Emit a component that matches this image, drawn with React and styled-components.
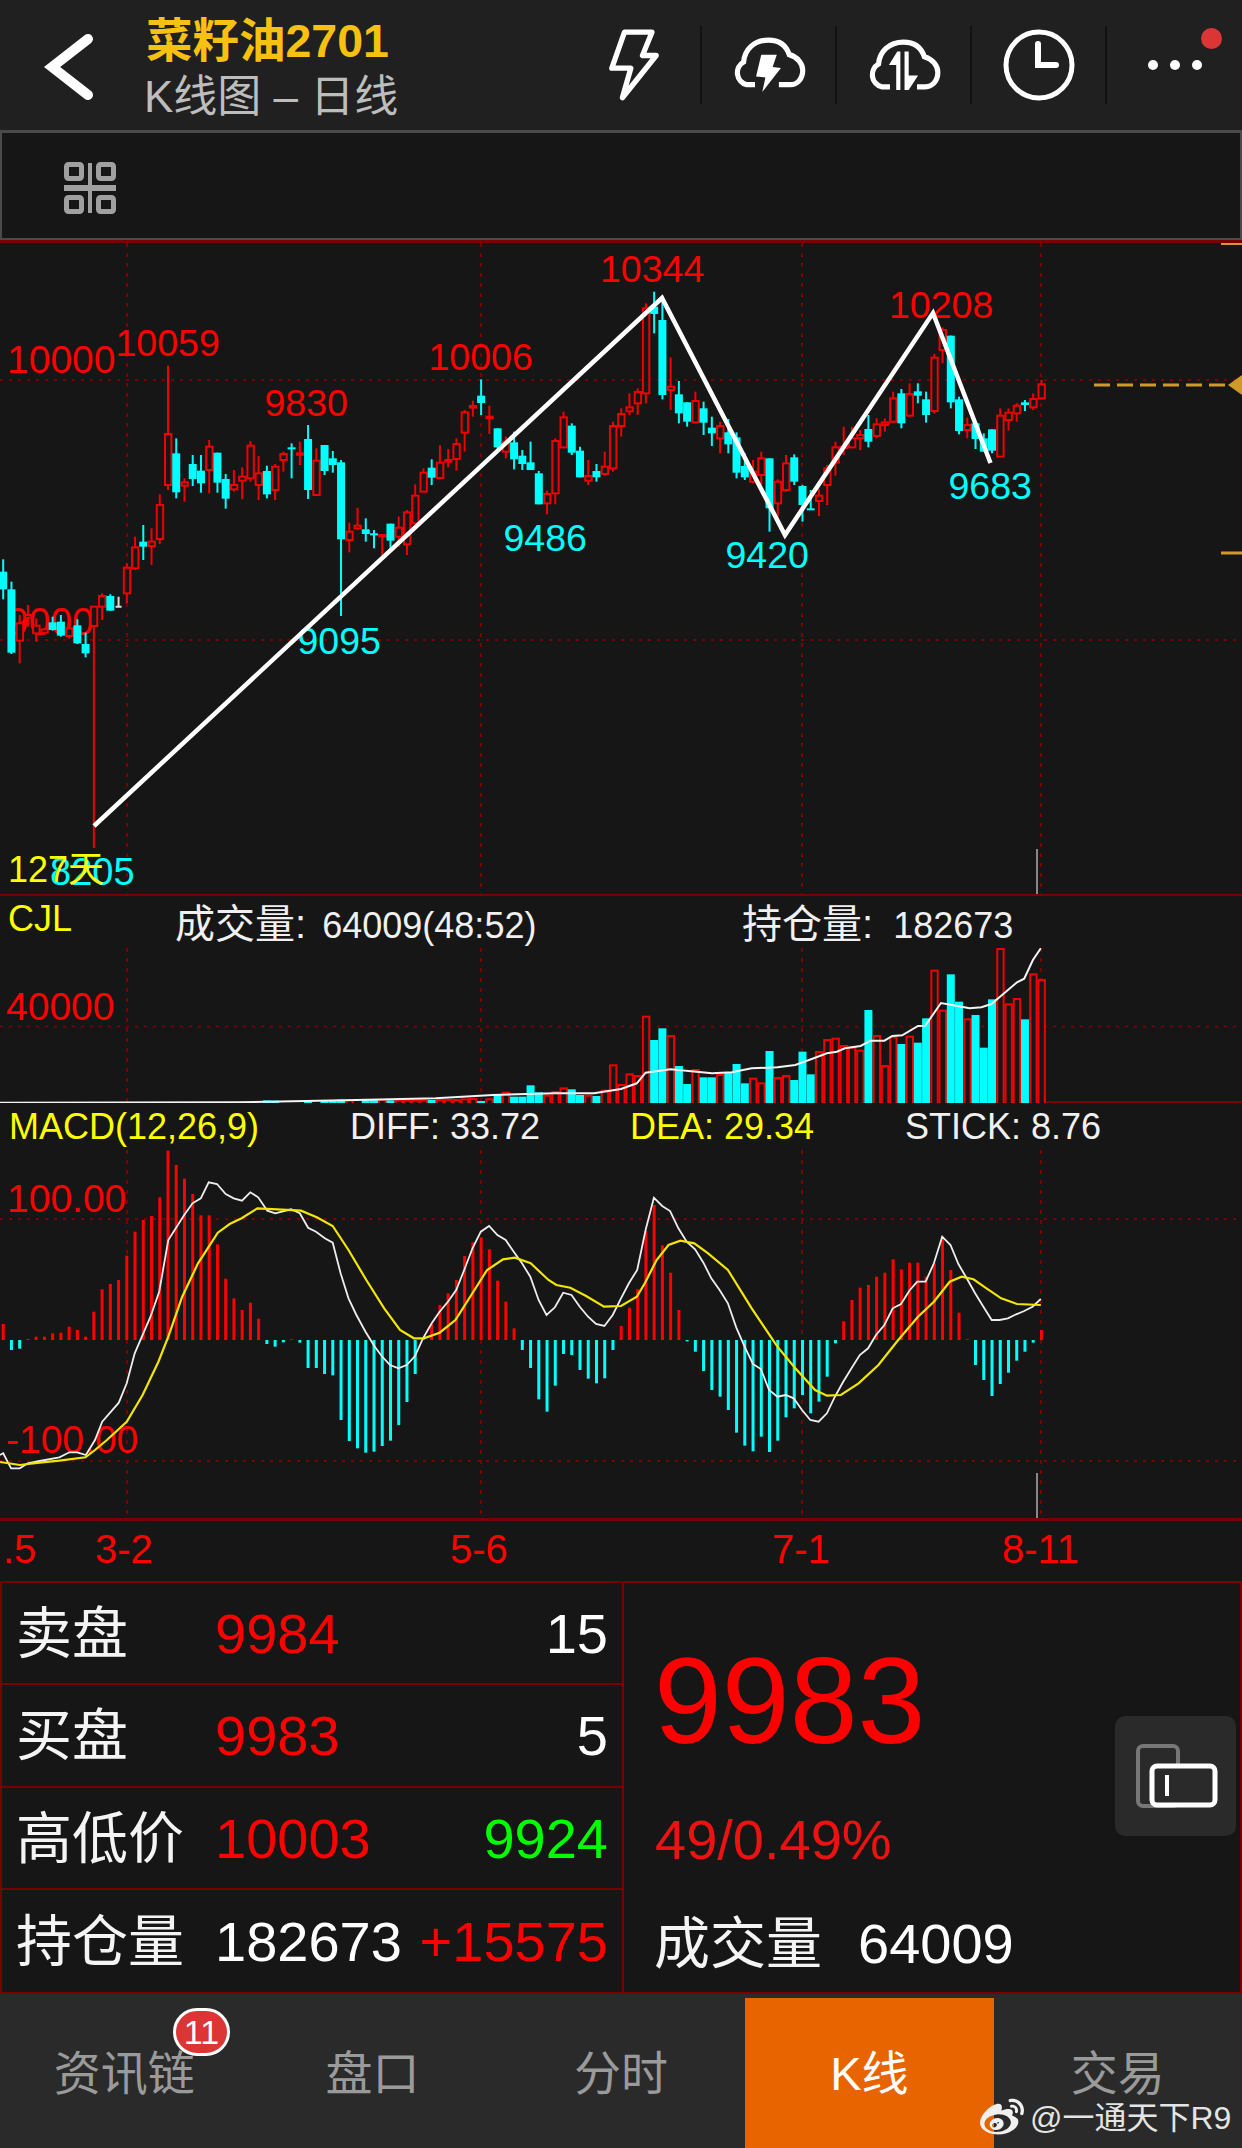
import React from 'react';
import styled, { createGlobalStyle } from 'styled-components';
import { FaWeibo } from 'react-icons/fa';

const FONT = `"Liberation Sans", "Noto Sans CJK SC", sans-serif`;
const RED = '#ff0000';
const CYAN = '#00ffff';
const GRID = '#780000';
const BG = '#161616';

const X0 = 3.2;
const STEP = 8.24;
const cx = (i) => X0 + STEP * i;
const ky = (z) => 240 + z / 3;
const vy = (z) => 880 + z / 3;
const my = (z) => 1120 + z / 3;

const CANDLES = [
  ['c',958,995,1048,1078],['c',1025,1048,1238,1242],['r',1125,1150,1202,1270],['r',1095,1125,1133,1160],['r',1135,1157,1180,1205],
  ['r',1165,1168,1178,1185],['c',1130,1147,1170,1172],['c',1125,1145,1187,1190],['r',1160,1165,1188,1196],['c',1138,1156,1210,1212],
  ['c',1178,1212,1240,1252],['r',1098,1100,1158,1824],['r',1060,1068,1100,1140],['c',1063,1068,1112,1112],['w',1070,1098,1100,1100],
  ['r',970,983,1060,1090],['r',890,922,985,990],['c',855,905,920,960],['r',865,905,918,975],['r',763,795,897,912],
  ['r',377,582,735,750],['c',595,640,757,775],['r',715,727,737,785],['c',645,672,717,738],['c',645,692,730,758],
  ['r',600,620,690,760],['c',638,638,728,758],['c',702,717,776,806],['r',690,735,748,755],['r',682,710,722,778],
  ['r',603,617,715,725],['r',648,700,735,780],['c',677,693,763,775],['r',672,680,750,780],['r',635,642,660,695],
  ['c',610,622,627,715],['r',605,640,644,675],['c',555,597,750,777],['r',625,662,765,765],['c',615,615,693,705],
  ['c',633,655,675,698],['c',660,667,898,1128],['r',848,875,900,937],['r',803,857,865,870],['c',835,868,882,905],
  ['c',870,880,885,925],['r',885,885,888,948],['c',851,851,902,925],['r',830,863,890,920],['r',810,817,913,945],
  ['r',733,767,850,860],['r',685,698,755,757],['c',658,683,713,735],['r',616,668,714,716],['r',627,660,665,682],
  ['r',595,612,657,692],['r',510,517,578,635],['r',482,498,503,530],['c',418,467,489,525],['r',497,530,533,582],
  ['c',565,565,622,625],['r',590,605,635,655],['c',575,607,658,688],['c',630,647,672,690],['c',605,667,690,690],
  ['c',693,700,793,793],['r',752,762,790,823],['r',595,603,760,793],['r',515,532,622,625],['c',550,557,638,645],
  ['c',620,632,712,712],['r',660,708,722,735],['c',672,693,712,725],['r',635,680,702,707],['r',545,558,685,695],
  ['r',505,522,558,590],['r',460,502,514,525],['r',445,456,490,525],['r',190,205,460,490],['c',155,200,222,280],
  ['c',180,240,465,478],['r',352,440,450,510],['c',423,463,520,550],['c',487,487,545,560],['r',455,483,547,550],
  ['c',485,505,548,585],['c',530,563,580,618],['r',545,558,595,640],['c',537,577,613,640],['c',577,592,698,715],
  ['c',640,678,712,720],['r',660,695,725,730],['r',635,655,705,735],['c',655,655,805,875],['r',718,725,790,830],
  ['r',645,670,750,755],['c',643,652,725,735],['c',735,738,795,845],['c',750,805,808,808],['r',748,767,783,828],
  ['r',675,685,735,795],['r',605,622,668,707],['r',560,620,623,645],['r',560,595,622,625],['r',570,585,595,630],
  ['c',525,567,605,622],['r',535,553,588,595],['r',535,547,555,575],['r',455,475,545,548],['c',447,460,550,565],
  ['r',430,462,527,530],['c',430,454,467,490],['c',455,478,525,548],['r',342,353,513,520],['r',262,270,330,370],
  ['c',287,287,487,505],['c',470,478,573,583],['r',533,555,570,595],['c',550,550,597,627],['c',580,595,635,635],
  ['c',568,568,632,640],['r',505,527,650,650],['r',505,518,540,572],['r',490,497,520,545],['c',480,487,495,513],
  ['r',460,477,502,510],['r',420,433,475,478],
];

const VOLUME = [
  [32,'c',661],[33,'c',662],[37,'c',664],[39,'c',661],[40,'c',660],[41,'c',659],[42,'r',661],[44,'c',658],[45,'c',658],[46,'r',660],
  [47,'c',661],[48,'r',662],[49,'r',662],[50,'r',662],[51,'r',662],[52,'c',660],[53,'r',660],[54,'r',660],[55,'r',660],[56,'r',658],
  [57,'r',657],[58,'c',663],[59,'r',658],[60,'c',645],[61,'r',638],[62,'c',650],[63,'c',650],[64,'c',616],[65,'c',637],[66,'r',647],
  [67,'r',636],[68,'r',625],[69,'c',628],[70,'c',645],[71,'r',647],[72,'c',648],[73,'r',632],[74,'r',556],[75,'r',615],[76,'r',583],
  [77,'r',588],[78,'r',410],[79,'c',480],[80,'c',445],[81,'r',468],[82,'c',558],[83,'c',612],[84,'r',570],[85,'c',592],[86,'c',592],
  [87,'r',585],[88,'c',578],[89,'c',552],[90,'c',610],[91,'r',596],[92,'r',610],[93,'c',513],[94,'r',594],[95,'r',588],[96,'c',600],
  [97,'c',515],[98,'c',583],[99,'r',516],[100,'r',480],[101,'r',476],[102,'r',498],[103,'r',503],[104,'r',512],[105,'c',390],[106,'r',468],
  [107,'r',558],[108,'r',472],[109,'c',492],[110,'r',470],[111,'c',488],[112,'c',415],[113,'r',272],[114,'r',392],[115,'c',283],[116,'c',365],
  [117,'r',418],[118,'c',405],[119,'c',503],[120,'c',358],[121,'r',207],[122,'r',373],[123,'r',357],[124,'c',418],[125,'r',283],[126,'r',300],
];

const MACD_BARS = [
  612,690,686,657,650,650,640,638,620,630,650,575,508,492,480,407,335,300,288,232,92,135,176,222,286,286,373,476,535,570,548,596,
  672,680,667,658,668,744,744,762,766,900,963,985,998,995,978,962,915,846,762,655,612,555,520,480,408,367,352,388,482,545,625,
  690,744,838,875,797,702,705,750,776,790,775,690,618,563,508,333,255,376,458,570,664,695,753,810,830,870,938,977,994,950,996,962,
  892,865,825,880,845,770,670,604,540,503,495,470,458,418,448,428,428,470,430,350,450,578,658,735,780,828,792,758,722,695,668,630,
];

const left = (x) => x / 2.525;
const right = (x) => 621 + x / 2.525;
const toPath = (segments, yFn) =>
  segments
    .flatMap(([fx, pts]) => pts.map(([x, y]) => `${fx(x).toFixed(1)},${yFn(y).toFixed(1)}`))
    .join(' ');

const VOL_LINE = toPath([
  [left, [[0,668],[600,667],[900,660],[1100,655],[1245,645],[1400,640],[1500,640],[1568,627]]],
  [right, [[40,610],[62,578],[125,568],[230,580],[280,577],[330,565],[395,562],[440,555],[490,533],[520,520],[545,515],[565,505],[605,498],[630,482],[665,482],[685,468],[710,466],[750,438],[768,437],[808,369],[860,380],[880,385],[910,382],[935,372],[960,347],[1000,307],[1018,296],[1040,240],[1060,205]]],
], vy);

const DIFF_LINE = toPath([
  [left, [[0,1005],[8,1000],[28,1045],[50,1045],[70,1030],[100,1023],[150,1012],[175,997],[195,997],[217,1005],[240,960],[258,905],[300,848],[320,790],[340,700],[380,590],[402,515],[425,360],[465,285],[486,250],[507,235],[527,187],[548,192],[570,222],[590,235],[611,242],[632,217],[652,232],[675,272],[695,280],[735,268],[757,280],[778,323],[798,335],[820,355],[840,368],[860,460],[880,535],[900,585],[923,635],[945,678],[965,710],[985,735],[1006,745],[1027,735],[1048,708],[1068,655],[1090,610],[1110,575],[1131,545],[1152,510],[1172,450],[1193,385],[1214,335],[1235,318],[1256,345],[1277,360],[1297,395],[1318,430],[1339,470],[1360,540],[1380,585],[1401,562],[1422,518],[1443,525],[1464,560],[1485,590],[1505,612],[1526,618],[1547,585]]],
  [right, [[0,535],[20,490],[41,450],[62,330],[83,233],[104,258],[124,273],[145,325],[166,365],[187,388],[208,428],[228,475],[249,510],[270,550],[291,622],[312,680],[333,732],[353,747],[374,810],[395,830],[416,825],[436,835],[457,870],[478,900],[499,905],[520,880],[540,830],[561,785],[582,745],[603,705],[624,685],[644,645],[665,615],[686,565],[707,552],[728,512],[748,485],[769,485],[790,430],[811,350],[832,375],[852,432],[873,475],[894,520],[915,560],[936,600],[956,600],[977,595],[998,583],[1018,573],[1039,560],[1060,537]]],
], my);

const DEA_LINE = toPath([
  [left, [[0,1026],[50,1035],[100,1028],[150,1022],[216,1012],[240,990],[270,960],[320,905],[360,825],[400,725],[425,650],[460,530],[500,430],[550,338],[580,312],[610,295],[650,265],[700,268],[760,272],[800,292],[840,318],[880,390],[925,480],[970,565],[1010,630],[1045,655],[1070,655],[1110,638],[1150,600],[1190,525],[1230,450],[1270,418],[1300,413],[1340,430],[1385,480],[1405,495],[1440,503],[1480,528],[1525,560]]],
  [right, [[0,558],[40,530],[60,490],[90,420],[120,375],[150,362],[185,370],[220,400],[270,450],[330,565],[395,680],[440,745],[490,810],[520,827],[555,825],[600,790],[650,735],[700,660],[750,590],[790,545],[830,485],[860,470],[890,478],[920,503],[960,535],[1000,552],[1060,555]]],
], my);

const GlobalStyle = createGlobalStyle`
  html, body { margin: 0; padding: 0; background: ${BG}; }
  #root { width: 1242px; height: 2148px; overflow: hidden; }
  * { box-sizing: border-box; }
  svg text { font-family: ${FONT}; }
`;

const Page = styled.div`
  width: 1242px;
  height: 2148px;
  background: ${BG};
  font-family: ${FONT};
  display: flex;
  flex-direction: column;
`;

const Header = styled.header`
  height: 130px;
  background: #202020;
  display: flex;
  align-items: center;
`;
const BackButton = styled.div`
  width: 144px;
  height: 100%;
  display: flex;
  padding: 34px 0 0 44px;
`;
const TitleBlock = styled.div`
  flex: 1;
  align-self: stretch;
  padding-top: 16px;
  display: flex;
  flex-direction: column;
`;
const Title = styled.div`
  color: #f6c110;
  font-weight: 700;
  font-size: 46.5px;
  line-height: 50px;
  padding-left: 2px;
`;
const Subtitle = styled.div`
  color: #bdbdbd;
  font-size: 44px;
  line-height: 62px;
`;
const IconCell = styled.div`
  width: 135px;
  height: 78px;
  display: flex;
  align-items: center;
  justify-content: center;
  border-right: ${(p) => (p.$last ? 'none' : '2px solid #111')};
  position: relative;
`;
const Dots = styled.div`
  display: flex;
  gap: 12px;
`;
const Dot = styled.span`
  width: 10px;
  height: 10px;
  border-radius: 50%;
  background: #fff;
`;
const Notice = styled.span`
  position: absolute;
  right: 20px;
  top: 2px;
  width: 21px;
  height: 21px;
  border-radius: 50%;
  background: #dc3535;
`;

const ToolPanel = styled.div`
  height: 110px;
  background: ${BG};
  border: 2px solid #4a4a4a;
  border-top-width: 3px;
  display: flex;
  align-items: center;
  padding: 4px 0 0 61px;
`;

const MainPane = styled.section`
  height: 656px;
  border-top: 3px solid ${GRID};
  border-bottom: 2px solid ${GRID};
`;
const ChartSvg = styled.svg`
  display: block;
  width: 1242px;
`;
const VolumeLegend = styled.div`
  height: 52px;
  display: grid;
  grid-template-columns: 175px 567px 1fr;
  color: #f0f0f0;
`;
const MacdLegend = styled.div`
  height: 47px;
  padding-top: 4px;
  display: grid;
  grid-template-columns: 350px 280px 275px 1fr;
  color: #f0f0f0;
`;
const LegendItem = styled.div`
  font-size: 40px;
  line-height: 46px;
  padding-top: 5px;
  white-space: nowrap;
  color: #f0f0f0;
`;
const LegendName = styled.div`
  font-size: 36px;
  line-height: 40px;
  padding: 3px 0 0 8px;
  color: #ffff00;
`;
const LegendValue = styled.span`
  font-size: 36px;
  margin-left: ${(p) => p.$gap}px;
`;
const MacdText = styled.div`
  font-size: 36px;
  line-height: 40px;
  white-space: nowrap;
  padding-left: ${(p) => p.$inset || 0}px;
  color: ${(p) => p.$color || '#f0f0f0'};
`;

const AxisRow = styled.div`
  height: 63px;
  border-top: 3px solid ${GRID};
  display: grid;
  grid-template-columns: 92px 355px 322px 230px 1fr;
  padding: 6px 0 0 3px;
  color: ${RED};
  font-size: 40px;
  line-height: 44px;
`;

const Quote = styled.section`
  height: 413px;
  display: grid;
  grid-template-columns: 622px 1fr;
  border: 2px solid ${GRID};
  position: relative;
`;
const QuoteLeft = styled.div`
  display: grid;
  grid-template-rows: repeat(4, 1fr);
  border-right: 2px solid ${GRID};
`;
const QuoteRow = styled.div`
  display: grid;
  grid-template-columns: 199px 1fr auto;
  align-items: center;
  padding: 2px 14px 0 14px;
  border-bottom: ${(p) => (p.$last ? 'none' : `2px solid ${GRID}`)};
`;
const Label = styled.span`
  color: #f4f4f4;
  font-size: 56px;
  line-height: 60px;
`;
const Num = styled.span`
  font-size: 56px;
  line-height: 60px;
  white-space: nowrap;
  color: ${(p) => p.$color || '#fff'};
`;
const QuoteRight = styled.div`
  display: grid;
  grid-template-rows: 206px 102px 1fr;
  padding-left: 30px;
  align-items: center;
`;
const BigPrice = styled.div`
  color: ${RED};
  font-size: 122px;
  line-height: 130px;
  padding-top: 30px;
`;
const Change = styled.div`
  color: #ec1212;
  font-size: 56px;
  line-height: 60px;
  padding-left: 1px;
`;
const VolumeRow = styled.div`
  display: flex;
  gap: 36px;
  align-items: center;
  padding-top: 4px;
`;
const FloatButton = styled.div`
  position: absolute;
  right: 4px;
  top: 133px;
  width: 121px;
  height: 120px;
  background: #2a2a2a;
  border-radius: 10px;
  display: flex;
  align-items: center;
  justify-content: center;
`;

const TabBar = styled.nav`
  flex: 1;
  position: relative;
  background: #2a2a2a;
  padding-top: 4px;
  display: grid;
  grid-template-columns: repeat(5, 1fr);
`;
const Tab = styled.div`
  position: relative;
  display: flex;
  align-items: center;
  justify-content: center;
  padding-bottom: 7px;
  font-size: 47px;
  color: ${(p) => (p.$active ? '#fff' : '#9a9a9a')};
  background: ${(p) => (p.$active ? '#e86400' : 'transparent')};
`;
const Badge = styled.span`
  position: absolute;
  left: 173px;
  top: 10px;
  width: 57px;
  height: 48px;
  border-radius: 24px;
  border: 3px solid #fff;
  background: #dc3535;
  color: #fff;
  font-size: 34px;
  display: flex;
  align-items: center;
  justify-content: center;
`;
const Watermark = styled.div`
  position: absolute;
  left: 980px;
  top: 102px;
  display: flex;
  align-items: center;
  gap: 6px;
  color: #e4e4e4;
  font-size: 32px;
  line-height: 44px;
  white-space: nowrap;
`;

const Back = () => (
  <svg width="50" height="66" viewBox="0 0 50 66">
    <path d="M44 5 L8 33 L44 61" fill="none" stroke="#fff" strokeWidth="10" strokeLinecap="round" strokeLinejoin="miter" />
  </svg>
);
const Bolt = () => (
  <svg width="54" height="74" viewBox="0 0 50 70">
    <path d="M16 4 L42 4 L33 26 L46 26 L14 66 L22 38 L4 38 Z" fill="none" stroke="#fff" strokeWidth="5" strokeLinejoin="round" />
  </svg>
);
const CLOUD = (l, r) => `M${l} 46 H15 A12 12 0 0 1 12 24 C13 12 22 3 36 3 C46 3 53 8 56 17 C64 19 69 26 69 32 C69 40 64 46 57 46 H${r}`;
const CloudBolt = () => (
  <svg width="75" height="56" viewBox="0 0 72 54">
    <path d={CLOUD(23, 46)} fill="none" stroke="#fff" strokeWidth="5" />
    <path d="M29 17 L44 17 L40 29 L48 30 L30 53 L33 39 L24 38 Z" fill="#fff" />
  </svg>
);
const CloudArrows = () => (
  <svg width="75" height="52" viewBox="0 0 72 50">
    <path d={CLOUD(23, 49)} fill="none" stroke="#fff" strokeWidth="5" />
    <path d="M30 12 L33 12 L33 49 L29 49 L29 25 L22 25 Z M37 12 L41 12 L41 35 L50 35 L41 49 L37 49 Z" fill="#fff" />
  </svg>
);
const Clock = () => (
  <svg width="72" height="72" viewBox="0 0 72 72">
    <circle cx="36" cy="36" r="33" fill="none" stroke="#fff" strokeWidth="5" />
    <path d="M35 15 V36 H53" fill="none" stroke="#fff" strokeWidth="6" strokeLinecap="round" strokeLinejoin="miter" />
  </svg>
);
const Apps = () => (
  <svg width="54" height="52" viewBox="0 0 54 52">
    <g fill="none" stroke="#a0a0a0" strokeWidth="5">
      <rect x="3.5" y="2.5" width="15" height="14" rx="2" />
      <rect x="35.5" y="2.5" width="15" height="14" rx="2" />
      <rect x="3.5" y="35.5" width="15" height="14" rx="2" />
      <rect x="35.5" y="35.5" width="15" height="14" rx="2" />
    </g>
    <rect x="1" y="23" width="52" height="6" fill="#a0a0a0" />
    <rect x="25" y="1" width="4" height="50" fill="#a0a0a0" />
  </svg>
);
const Windows = () => (
  <svg width="84" height="68" viewBox="0 0 84 68">
    <rect x="4" y="4" width="40" height="60" rx="5" fill="none" stroke="#777" strokeWidth="4" />
    <rect x="18" y="24" width="63" height="39" rx="5" fill="#2a2a2a" stroke="#fff" strokeWidth="5" />
    <rect x="31" y="33" width="4" height="21" fill="#fff" />
  </svg>
);

const Candle = ({ i, d }) => {
  const [kind, hi, top, bot, lo] = d;
  const x = cx(i);
  const [yh, yt, yb, yl] = [ky(hi), ky(top), ky(bot), ky(lo)];
  if (kind === 'w') {
    return <path d={`M${x} ${yh} V${yb} M${x - 3} ${yb} H${x + 3}`} stroke="#ddd" strokeWidth="2" fill="none" />;
  }
  if (kind === 'c') {
    return (
      <g>
        <line x1={x} x2={x} y1={yh} y2={yl} stroke={CYAN} strokeWidth="2" />
        <rect x={x - 4} y={yt} width="8" height={Math.max(yb - yt, 2)} fill={CYAN} />
      </g>
    );
  }
  return (
    <g>
      <line x1={x} x2={x} y1={yh} y2={yt} stroke="#f00000" strokeWidth="2" />
      <line x1={x} x2={x} y1={yb} y2={yl} stroke="#f00000" strokeWidth="2" />
      <rect x={x - 3} y={yt} width="6.4" height={Math.max(yb - yt, 1.5)} fill={BG} stroke="#f00000" strokeWidth="2" />
    </g>
  );
};

const GridV = ({ from, to }) => (
  <g stroke={GRID} strokeWidth="2" strokeDasharray="4 6">
    {[127, 481, 802, 1041].map((x) => (
      <line key={x} x1={x} x2={x} y1={from} y2={to} />
    ))}
  </g>
);
const GridH = ({ ys }) => (
  <g stroke={GRID} strokeWidth="2" strokeDasharray="3 6">
    {ys.map((y) => (
      <line key={y} x1="0" x2="1242" y1={y} y2={y} />
    ))}
  </g>
);

const PIVOTS = [
  ['10059', 115.5, 356, RED], ['9830', 264.5, 416, RED], ['10006', 428.5, 370, RED], ['10344', 600, 282, RED], ['10208', 889, 318, RED],
  ['9095', 297.5, 654, CYAN], ['9486', 503.5, 551, CYAN], ['9420', 725.5, 568, CYAN], ['9683', 948.5, 499, CYAN],
];

const PriceChart = () => (
  <ChartSvg height="651" viewBox="0 243 1242 651">
    <GridV from={243} to={894} />
    <GridH ys={[380, 640]} />
    <text x="7" y="373" fontSize="39" fill={RED}>10000</text>
    <text x="7" y="635" fontSize="39" fill={RED}>9000</text>
    {CANDLES.map((d, i) => <Candle key={i} i={i} d={d} />)}
    {PIVOTS.map(([t, x, y, c]) => <text key={t} x={x} y={y} fontSize="37.5" fill={c}>{t}</text>)}
    <polyline points="94,826 662,298 785,535 933,313 990.5,463" fill="none" stroke="#fff" strokeWidth="4.5" strokeLinejoin="miter" />
    <text x="50" y="885" fontSize="38" fill={CYAN}>8205</text>
    <text x="8" y="882" fontSize="36" fill="#ffff00">127天</text>
    <line x1="1037" x2="1037" y1="849" y2="894" stroke="#888" strokeWidth="2" />
    <line x1="1094" x2="1232" y1="385" y2="385" stroke="#d09a28" strokeWidth="3" strokeDasharray="16 7" />
    <polygon points="1242,375 1228,385 1242,395" fill="#d09a28" />
    <line x1="1221" x2="1242" y1="244" y2="244" stroke="#d09a28" strokeWidth="2" />
    <line x1="1221" x2="1242" y1="553" y2="553" stroke="#d09a28" strokeWidth="3" />
  </ChartSvg>
);

const VolumeChart = () => (
  <ChartSvg height="155" viewBox="0 948 1242 155">
    <GridV from={948} to={1103} />
    <GridH ys={[1026.5]} />
    <text x="6" y="1020" fontSize="39" fill={RED}>40000</text>
    <line x1="1046" x2="1242" y1="1102" y2="1102" stroke={GRID} strokeWidth="2" />
    {VOLUME.map(([i, kind, z]) => {
      const x = cx(i);
      const y = vy(z);
      return kind === 'c' ? (
        <rect key={i} x={x - 4} y={y} width="8" height={1103 - y} fill={CYAN} />
      ) : (
        <rect key={i} x={x - 3} y={y} width="6.4" height={1104 - y} fill={BG} stroke="#f00000" strokeWidth="2" />
      );
    })}
    <polyline points={VOL_LINE} fill="none" stroke="#f4f4f4" strokeWidth="2" />
  </ChartSvg>
);

const MacdChart = () => (
  <ChartSvg height="368" viewBox="0 1150 1242 368">
    <GridV from={1150} to={1518} />
    <GridH ys={[1219, 1461]} />
    <text x="7" y="1212" fontSize="39" fill={RED}>100.00</text>
    <text x="6" y="1453" fontSize="39" fill={RED}>-100.00</text>
    {MACD_BARS.map((z, i) => {
      const y = my(z);
      return <line key={i} x1={cx(i)} x2={cx(i)} y1={my(660)} y2={y} stroke={z < 660 ? RED : CYAN} strokeWidth="3" />;
    })}
    <polyline points={DIFF_LINE} fill="none" stroke="#eeeeee" strokeWidth="1.8" />
    <polyline points={DEA_LINE} fill="none" stroke="#f2e600" strokeWidth="2.2" />
    <line x1="1037" x2="1037" y1="1473" y2="1518" stroke="#888" strokeWidth="2" />
  </ChartSvg>
);

export default function App() {
  return (
    <Page>
      <GlobalStyle />
      <Header>
        <BackButton><Back /></BackButton>
        <TitleBlock>
          <Title>菜籽油2701</Title>
          <Subtitle>K线图 – 日线</Subtitle>
        </TitleBlock>
        <IconCell><Bolt /></IconCell>
        <IconCell><CloudBolt /></IconCell>
        <IconCell><CloudArrows /></IconCell>
        <IconCell><Clock /></IconCell>
        <IconCell $last>
          <Dots><Dot /><Dot /><Dot /></Dots>
          <Notice />
        </IconCell>
      </Header>
      <ToolPanel><Apps /></ToolPanel>
      <MainPane><PriceChart /></MainPane>
      <VolumeLegend>
        <LegendName>CJL</LegendName>
        <LegendItem>成交量: <LegendValue $gap={5}>64009(48:52)</LegendValue></LegendItem>
        <LegendItem>持仓量: <LegendValue $gap={9}>182673</LegendValue></LegendItem>
      </VolumeLegend>
      <VolumeChart />
      <MacdLegend>
        <MacdText $inset={9} $color="#ffff00">MACD(12,26,9)</MacdText>
        <MacdText>DIFF: 33.72</MacdText>
        <MacdText $color="#ffff00">DEA: 29.34</MacdText>
        <MacdText>STICK: 8.76</MacdText>
      </MacdLegend>
      <MacdChart />
      <AxisRow>
        <span>.5</span>
        <span>3-2</span>
        <span>5-6</span>
        <span>7-1</span>
        <span>8-11</span>
      </AxisRow>
      <Quote>
        <QuoteLeft>
          <QuoteRow>
            <Label>卖盘</Label><Num $color={RED}>9984</Num><Num>15</Num>
          </QuoteRow>
          <QuoteRow>
            <Label>买盘</Label><Num $color={RED}>9983</Num><Num>5</Num>
          </QuoteRow>
          <QuoteRow>
            <Label>高低价</Label><Num $color={RED}>10003</Num><Num $color="#00ff00">9924</Num>
          </QuoteRow>
          <QuoteRow $last>
            <Label>持仓量</Label><Num>182673</Num><Num $color={RED}>+15575</Num>
          </QuoteRow>
        </QuoteLeft>
        <QuoteRight>
          <BigPrice>9983</BigPrice>
          <Change>49/0.49%</Change>
          <VolumeRow><Label>成交量</Label><Num>64009</Num></VolumeRow>
        </QuoteRight>
        <FloatButton><Windows /></FloatButton>
      </Quote>
      <TabBar>
        <Tab>资讯链<Badge>11</Badge></Tab>
        <Tab>盘口</Tab>
        <Tab>分时</Tab>
        <Tab $active>K线</Tab>
        <Tab>交易</Tab>
        <Watermark><FaWeibo size={44} color="#f0f0f0" />@一通天下R9</Watermark>
      </TabBar>
    </Page>
  );
}
